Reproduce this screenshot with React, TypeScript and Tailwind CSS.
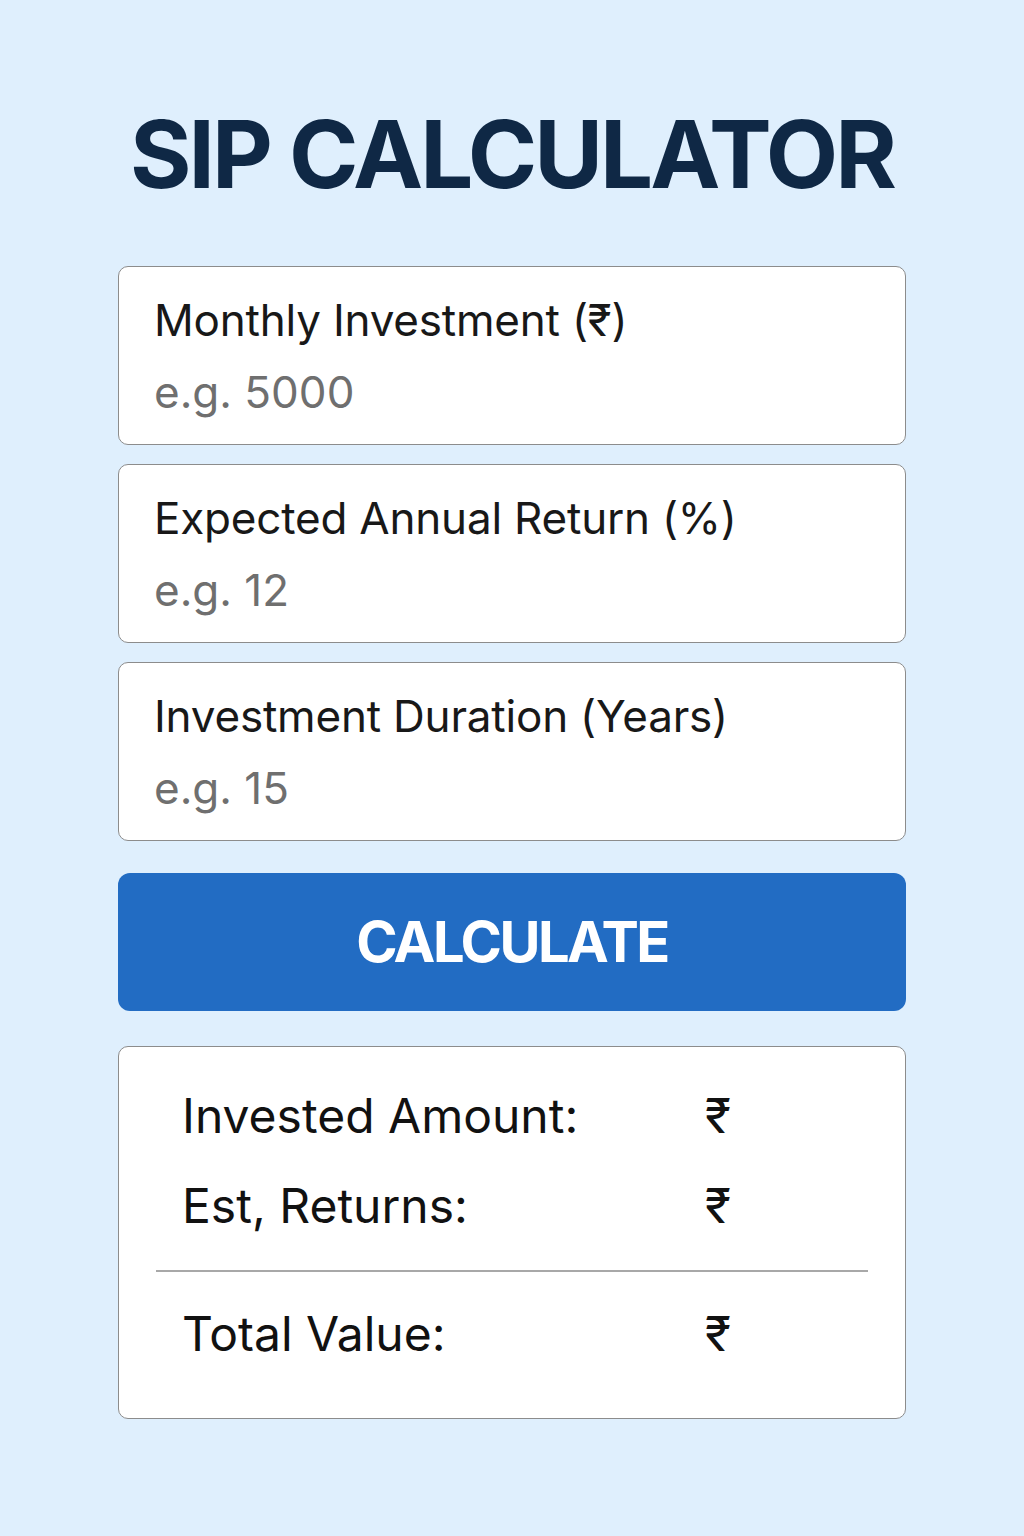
import { useState } from 'react';

interface Field {
  label: string;
  placeholder: string;
}

const fields: Field[] = [
  { label: 'Monthly Investment (₹)', placeholder: 'e.g. 5000' },
  { label: 'Expected Annual Return (%)', placeholder: 'e.g. 12' },
  { label: 'Investment Duration (Years)', placeholder: 'e.g. 15' },
];

const results = ['Invested Amount:', 'Est, Returns:'];

export default function App() {
  const [values, setValues] = useState<string[]>(['', '', '']);

  return (
    <div className="min-h-[1536px] w-full bg-[#dfeffd] font-['Inter',sans-serif]">
      <div className="mx-auto flex w-[788px] flex-col pt-[107px]">
        <h1 className="whitespace-nowrap text-center text-[94px] font-bold leading-none tracking-[-3px] text-[#0f2845]">
          SIP CALCULATOR
        </h1>

        <div className="mt-[65px] flex flex-col gap-[19px]">
          {fields.map((f, i) => (
            <label
              key={f.label}
              className="flex h-[179px] flex-col rounded-[10px] border border-[#8c8c8c] bg-white px-[35px] pt-[25px]"
            >
              <span className="text-[44px] leading-[56px] tracking-[-0.2px] text-[#181818]">{f.label}</span>
              <input
                value={values[i]}
                onChange={(e) => {
                  const next = [...values];
                  next[i] = e.target.value;
                  setValues(next);
                }}
                placeholder={f.placeholder}
                className="mt-[16px] bg-transparent text-[44px] leading-[56px] text-[#181818] outline-none placeholder:text-[#6f6f6f]"
              />
            </label>
          ))}
        </div>

        <button className="mt-[32px] h-[138px] w-full rounded-[12px] bg-[#226cc3] text-[56px] font-bold tracking-[-2.5px] text-white">
          CALCULATE
        </button>

        <div className="mt-[35px] flex h-[373px] flex-col rounded-[10px] border border-[#8c8c8c] bg-white px-[37px] pt-[41px]">
          <div className="flex flex-col gap-[34px] px-[26px]">
            {results.map((r) => (
              <div key={r} className="flex items-center text-[48px] leading-[56px] text-[#111]">
                <span className="w-[523px]">{r}</span>
                <span>₹</span>
              </div>
            ))}
          </div>
          <div className="mt-[36px] h-[2px] bg-[#a8a8a8]" />
          <div className="mt-[34px] flex items-center px-[26px] text-[48px] leading-[56px] text-[#111]">
            <span className="w-[523px]">Total Value:</span>
            <span>₹</span>
          </div>
        </div>
      </div>
    </div>
  );
}
